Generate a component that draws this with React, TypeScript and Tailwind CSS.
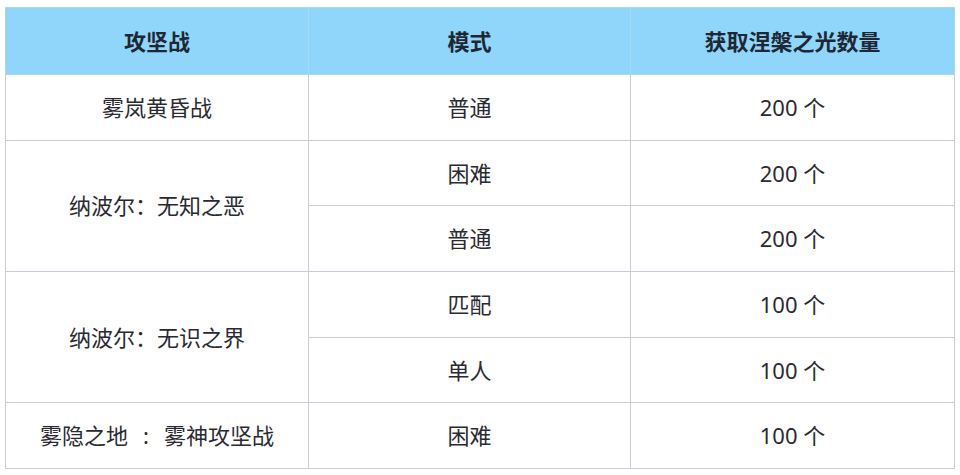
import React from "react";

const rows: { name: React.ReactNode; key: string; span: number; modes: string[][] }[] = [
  { key: "a", name: "雾岚黄昏战", span: 1, modes: [["普通", "200 个"]] },
  { key: "b", name: "纳波尔：无知之恶", span: 2, modes: [["困难", "200 个"], ["普通", "200 个"]] },
  { key: "c", name: "纳波尔：无识之界", span: 2, modes: [["匹配", "100 个"], ["单人", "100 个"]] },
  {
    key: "d",
    name: (
      <>
        雾隐之地<span className="mx-[15px]">:</span>雾神攻坚战
      </>
    ),
    span: 1,
    modes: [["困难", "100 个"]],
  },
];

const cell = "border border-[#c9cbd9] text-center align-middle p-0";

export default function App() {
  return (
    <div
      className="w-[960px] h-[475px] bg-white pt-[7px] pl-[5px]"
      style={{ fontFamily: '"Noto Sans", "Noto Sans CJK SC", sans-serif' }}
    >
      <table className="border-collapse w-[949px] table-fixed text-[22px] text-[#2a2a33]">
        <colgroup>
          <col className="w-[303px]" />
          <col className="w-[322px]" />
          <col className="w-[324px]" />
        </colgroup>
        <thead>
          <tr className="bg-[#8fd6fa] h-[67px]">
            <th className="border border-[#a9d9f0] font-bold text-[#1e2733]">攻坚战</th>
            <th className="border border-[#a9d9f0] font-bold text-[#1e2733]">模式</th>
            <th className="border border-[#a9d9f0] font-bold text-[#1e2733]">获取涅槃之光数量</th>
          </tr>
        </thead>
        <tbody>
          {rows.map((r) =>
            r.modes.map((m, i) => (
              <tr key={r.key + i} className="h-[65.7px]">
                {i === 0 && (
                  <td rowSpan={r.span} className={cell}>
                    {r.name}
                  </td>
                )}
                <td className={cell}>{m[0]}</td>
                <td className={cell}>{m[1]}</td>
              </tr>
            ))
          )}
        </tbody>
      </table>
    </div>
  );
}
